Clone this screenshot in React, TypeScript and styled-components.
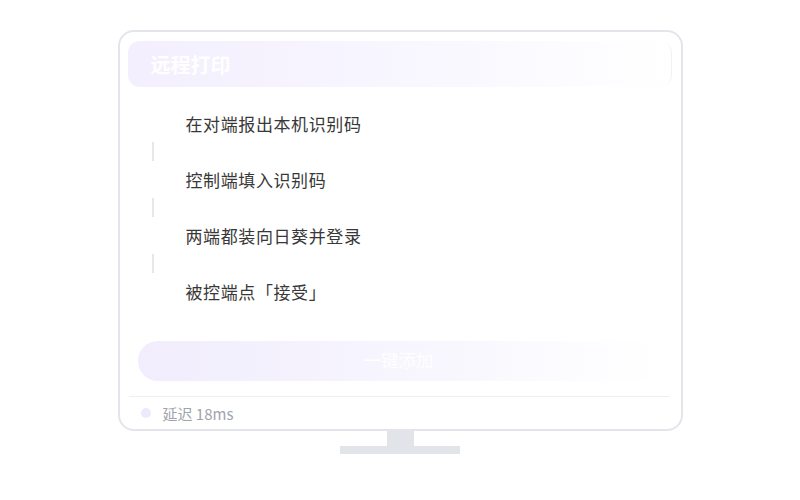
import styled, { createGlobalStyle } from "styled-components";

const GlobalStyle = createGlobalStyle`
  html, body {
    margin: 0;
    padding: 0;
    background: #ffffff;
    font-family: "Noto Sans CJK SC", "Noto Sans", sans-serif;
  }
`;

const Page = styled.div`
  width: 800px;
  height: 500px;
  display: flex;
  flex-direction: column;
  align-items: center;
  padding-top: 30px;
  box-sizing: border-box;
`;

const Screen = styled.div`
  width: 565px;
  height: 401px;
  box-sizing: border-box;
  border: 2px solid #e3e5ea;
  border-radius: 16px;
  padding: 9px 9px 0 8px;
  display: flex;
  flex-direction: column;
  background: #ffffff;
`;

const Header = styled.div`
  height: 46px;
  border-radius: 12px;
  background: linear-gradient(90deg, #f3effe 0%, #f8f6ff 50%, #ffffff 100%);
  display: flex;
  align-items: center;
  padding-left: 23px;
  border-right: 1px solid #f1f2f5;
`;

const Title = styled.div`
  color: #ffffff;
  font-size: 20px;
  font-weight: 700;
`;

const Steps = styled.div`
  margin-top: 22px;
  display: flex;
  flex-direction: column;
`;

const StepRow = styled.div`
  height: 28px;
  display: flex;
  align-items: center;
  padding-left: 58px;
  font-size: 17px;
  letter-spacing: 0.6px;
  color: #383838;
`;

const Connector = styled.div`
  height: 28px;
  display: flex;
  align-items: center;
  padding-left: 24px;
`;

const Line = styled.div`
  width: 2px;
  height: 19px;
  background: #e6e7ea;
`;

const ActionButton = styled.div`
  margin: 36px 12px 0 10px;
  height: 40px;
  padding-bottom: 4px;
  box-sizing: border-box;
  border-radius: 20px;
  background: linear-gradient(90deg, #f1edfd 0%, #f7f5fe 50%, #ffffff 100%);
  color: #ffffff;
  font-size: 17.5px;
  display: flex;
  align-items: center;
  justify-content: center;
`;

const Divider = styled.div`
  margin: 15px 2px 0 1px;
  height: 1px;
  background: #eeeff2;
`;

const Footer = styled.div`
  flex: 1;
  display: flex;
  align-items: center;
  gap: 12px;
  padding-left: 13px;
  font-size: 15px;
  color: #a0a4ad;
`;

const Dot = styled.span`
  width: 10px;
  height: 10px;
  border-radius: 50%;
  background: #eeeafd;
`;

const Neck = styled.div`
  width: 27px;
  height: 15px;
  background: #e1e4e8;
`;

const Base = styled.div`
  width: 120px;
  height: 8px;
  background: #e1e4e8;
`;

const steps = ["在对端报出本机识别码", "控制端填入识别码", "两端都装向日葵并登录", "被控端点「接受」"];

export default function App() {
  return (
    <>
      <GlobalStyle />
      <Page>
        <Screen>
          <Header>
            <Title>远程打印</Title>
          </Header>
          <Steps>
            {steps.map((s, i) => (
              <div key={s}>
                {i > 0 && (
                  <Connector>
                    <Line />
                  </Connector>
                )}
                <StepRow>{s}</StepRow>
              </div>
            ))}
          </Steps>
          <ActionButton>一键添加</ActionButton>
          <Divider />
          <Footer>
            <Dot />
            <span>延迟 18ms</span>
          </Footer>
        </Screen>
        <Neck />
        <Base />
      </Page>
    </>
  );
}
